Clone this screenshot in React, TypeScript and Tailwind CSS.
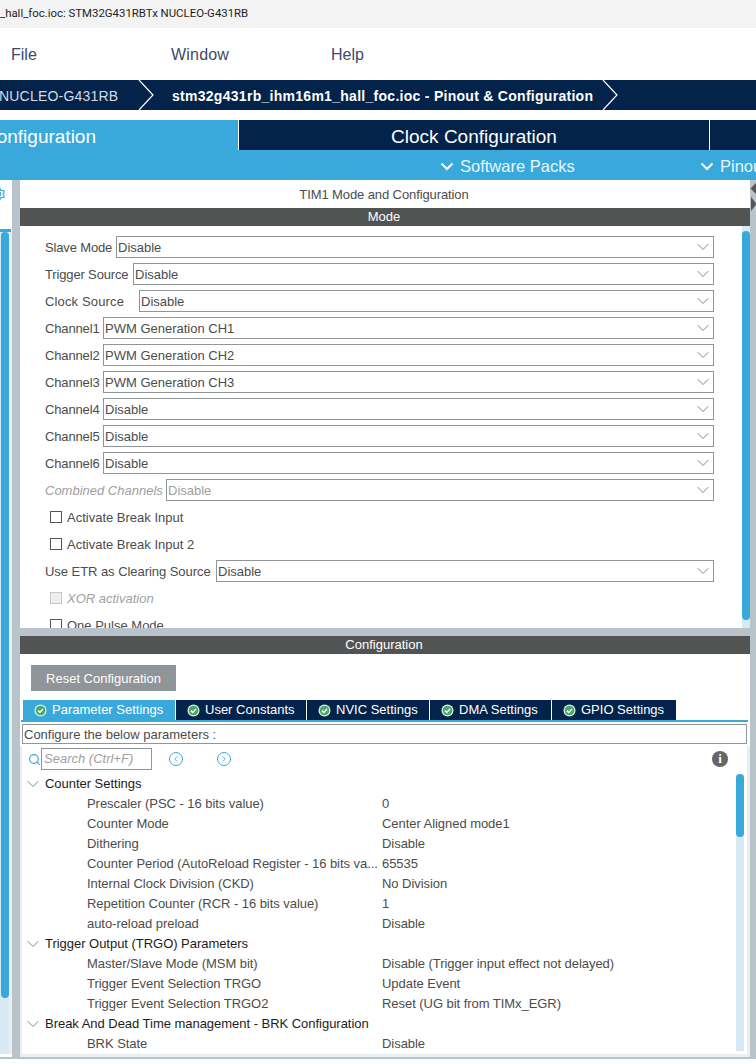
import React from 'react';
import { ChevronDown, ChevronLeft, ChevronRight, Search, Settings } from 'lucide-react';

const modeRows = [
    { label: 'Slave Mode', value: 'Disable', left: 'w-[71px]' },
    { label: 'Trigger Source', value: 'Disable', left: 'w-[88px]' },
    { label: 'Clock Source', value: 'Disable', left: 'w-[94px]' },
    { label: 'Channel1', value: 'PWM Generation CH1', left: 'w-[58px]' },
    { label: 'Channel2', value: 'PWM Generation CH2', left: 'w-[58px]' },
    { label: 'Channel3', value: 'PWM Generation CH3', left: 'w-[58px]' },
    { label: 'Channel4', value: 'Disable', left: 'w-[58px]' },
    { label: 'Channel5', value: 'Disable', left: 'w-[58px]' },
    { label: 'Channel6', value: 'Disable', left: 'w-[58px]' },
];

const tabs = [
    { name: 'Parameter Settings', width: 'w-[152px]', active: true },
    { name: 'User Constants', width: 'w-[131px]', active: false },
    { name: 'NVIC Settings', width: 'w-[123px]', active: false },
    { name: 'DMA Settings', width: 'w-[122px]', active: false },
    { name: 'GPIO Settings', width: 'w-[125px]', active: false },
];

const tree = [
    { kind: 'group', label: 'Counter Settings' },
    { kind: 'item', label: 'Prescaler (PSC - 16 bits value)', value: '0' },
    { kind: 'item', label: 'Counter Mode', value: 'Center Aligned mode1' },
    { kind: 'item', label: 'Dithering', value: 'Disable' },
    { kind: 'item', label: 'Counter Period (AutoReload Register - 16 bits va...', value: '65535' },
    { kind: 'item', label: 'Internal Clock Division (CKD)', value: 'No Division' },
    { kind: 'item', label: 'Repetition Counter (RCR - 16 bits value)', value: '1' },
    { kind: 'item', label: 'auto-reload preload', value: 'Disable' },
    { kind: 'group', label: 'Trigger Output (TRGO) Parameters' },
    { kind: 'item', label: 'Master/Slave Mode (MSM bit)', value: 'Disable (Trigger input effect not delayed)' },
    { kind: 'item', label: 'Trigger Event Selection TRGO', value: 'Update Event' },
    { kind: 'item', label: 'Trigger Event Selection TRGO2', value: 'Reset (UG bit from TIMx_EGR)' },
    { kind: 'group', label: 'Break And Dead Time management - BRK Configuration' },
    { kind: 'item', label: 'BRK State', value: 'Disable' },
];

function Select({ value, disabled }: { value: string; disabled?: boolean }) {
    return (
        <div className={`flex-1 h-[22px] border border-[#8f9599] flex items-center pl-[1px] ${disabled ? 'text-[#a0a0a0]' : 'text-[#4c4c4c]'}`}>
            <span className="flex-1 pt-[1px]">{value}</span>
            <ChevronDown size={20} strokeWidth={1.1} className="text-[#77797c]" />
        </div>
    );
}

function Checkbox({ label, disabled }: { label: string; disabled?: boolean }) {
    return (
        <div className={`h-[22px] mb-[5px] pl-[30px] flex items-center gap-[5px] ${disabled ? 'text-[#a0a0a0] italic' : 'text-[#4c4c4c]'}`}>
            <span className={`w-3 h-3 border ${disabled ? 'border-[#c6c8ca] bg-[#eeeeee]' : 'border-[#555555]'}`} />
            <span className="pt-[1px]">{label}</span>
        </div>
    );
}

function TabCheck() {
    return (
        <svg width="13" height="13" viewBox="0 0 13 13">
            <circle cx="6.5" cy="6.5" r="6" fill="#e6f4e4" />
            <circle cx="6.5" cy="6.5" r="4.8" fill="#46a86a" />
            <path d="M4 6.6l1.8 1.8L9 5" fill="none" stroke="#ffffff" strokeWidth="1.5" />
        </svg>
    );
}

function PackChevron() {
    return (
        <svg width="14" height="9" viewBox="0 0 14 9" className="shrink-0">
            <path d="M1.5 1.5L7 7l5.5-5.5" fill="none" stroke="#ffffff" strokeWidth="2" />
        </svg>
    );
}

export default function App() {
    return (
        <div className="w-[756px] h-[1064px] overflow-hidden bg-white flex flex-col text-[13px] font-['Liberation_Sans',Arial,sans-serif]">
            <div className="h-[28px] shrink-0 bg-[#f3f3f3] flex items-center text-[11.4px] text-[#1f1f1f] font-['Roboto',sans-serif] whitespace-nowrap">
                _hall_foc.ioc: STM32G431RBTx NUCLEO-G431RB
            </div>

            <div className="h-[52px] shrink-0 flex items-center pt-[1px] text-[16px] text-[#3c4a6b]">
                <span className="w-[160px] ml-[11px]">File</span>
                <span className="w-[160px] tracking-[0.2px]">Window</span>
                <span>Help</span>
            </div>

            {/* breadcrumb */}
            <div className="h-[30px] shrink-0 bg-[#03234b] flex items-center text-white whitespace-nowrap">
                <span className="w-[139px] -ml-[1px] pt-[2px] text-[14px] text-[#d5dbe4] tracking-[0.2px]">NUCLEO-G431RB</span>
                <svg width="17" height="30" viewBox="0 0 17 30" className="shrink-0">
                    <path d="M1 0l14 15L1 30" fill="none" stroke="#ffffff" strokeWidth="1.2" />
                </svg>
                <span className="ml-[17px] w-[430px] pt-[2px] text-[14px] font-bold tracking-[0.28px]">stm32g431rb_ihm16m1_hall_foc.ioc - Pinout &amp; Configuration</span>
                <svg width="17" height="30" viewBox="0 0 17 30" className="shrink-0">
                    <path d="M1 0l14 15L1 30" fill="none" stroke="#ffffff" strokeWidth="1.2" />
                </svg>
            </div>

            <div className="h-[10px] shrink-0" />

            {/* top tabs */}
            <div className="h-[30px] shrink-0 flex text-[19px] whitespace-nowrap bg-[#03234b] text-white">
                <div className="w-[239px] bg-[#39a9dc] border-r border-white flex items-center justify-end pr-[142px] pt-[4px]">onfiguration</div>
                <div className="w-[471px] border-r border-white flex items-center justify-center pt-[4px]">Clock Configuration</div>
            </div>
            <div className="h-[30px] shrink-0 bg-[#39a9dc] flex items-center pt-[2px] text-[16.5px] text-[#e8f5fb] whitespace-nowrap">
                <span className="ml-[440px]"><PackChevron /></span>
                <span className="ml-[6px] w-[240px] shrink-0">Software Packs</span>
                <PackChevron />
                <span className="ml-[6px]">Pinout</span>
            </div>

            <div className="h-[879px] shrink-0 flex border-b-2 border-[#b8c4ca]">
                {/* collapsed left pane */}
                <div className="w-[12px] shrink-0 flex flex-col pb-[3px]">
                    <div className="h-[49px] shrink-0 relative overflow-hidden">
                        <Settings size={14} strokeWidth={2} className="absolute -left-[8px] top-[7px] text-[#39a9dc]" />
                    </div>
                    <div className="h-[3px] w-[11px] shrink-0 bg-[#39a9dc]" />
                    <div className="flex-1 bg-[#e9eef1] pr-[3px]">
                        <div className="h-full bg-[#d6e9f5] pl-[1px]">
                            <div className="h-[766px] bg-[#39a9dc] rounded-[4px]" />
                        </div>
                    </div>
                </div>
                <div className="w-[8px] shrink-0 bg-[#b8c4ca]" />

                <div className="w-[730px] shrink-0 flex flex-col">
                    {/* mode panel */}
                    <div className="h-[448px] shrink-0 flex flex-col overflow-hidden">
                        <div className="h-[28px] shrink-0 flex items-center justify-center pr-[2px] pt-[1px] text-[#4c4c4c] tracking-[-0.1px]">TIM1 Mode and Configuration</div>
                        <div className="h-[18px] shrink-0 bg-[#525453] text-white flex items-center justify-center pr-[2px]">Mode</div>
                        <div className="flex-1 min-h-0 flex">
                            <div className="w-[722px] pt-[10px] pr-[28px] overflow-hidden">
                                {modeRows.map((row) => (
                                    <div key={row.label} className="h-[22px] mb-[5px] pl-[25px] flex items-center">
                                        <span className={`${row.left} shrink-0 pt-[1px] text-[#4c4c4c] ${row.label === 'Clock Source' ? 'tracking-[0.15px]' : 'tracking-[-0.15px]'} whitespace-nowrap`}>{row.label}</span>
                                        <Select value={row.value} />
                                    </div>
                                ))}
                                <div className="h-[22px] mb-[5px] pl-[25px] flex items-center">
                                    <span className="w-[121px] shrink-0 pt-[1px] text-[#a0a0a0] italic whitespace-nowrap">Combined Channels</span>
                                    <Select value="Disable" disabled />
                                </div>
                                <Checkbox label="Activate Break Input" />
                                <Checkbox label="Activate Break Input 2" />
                                <div className="h-[22px] mb-[5px] pl-[25px] flex items-center">
                                    <span className="w-[171px] shrink-0 pt-[1px] text-[#4c4c4c] tracking-[-0.05px] whitespace-nowrap">Use ETR as Clearing Source</span>
                                    <Select value="Disable" />
                                </div>
                                <Checkbox label="XOR activation" disabled />
                                <Checkbox label="One Pulse Mode" />
                            </div>
                            <div className="w-[8px] shrink-0 bg-[#d6e9f5] pt-[5px]">
                                <div className="h-[389px] bg-[#39a9dc] rounded-[4px]" />
                            </div>
                        </div>
                    </div>

                    <div className="h-[8px] shrink-0 bg-[#b8c4ca]" />

                    {/* configuration panel */}
                    <div className="h-[18px] shrink-0 bg-[#525453] text-white flex items-center justify-center pr-[2px]">Configuration</div>
                    <div className="pl-[11px] pt-[11px]">
                        <button className="w-[145px] h-[26px] pt-[1px] bg-[#909599] text-white">Reset Configuration</button>
                    </div>
                    <div className="h-[20px] mt-[9px] ml-[3px] shrink-0 flex">
                        {tabs.map((tab) => (
                            <div
                                key={tab.name}
                                className={`${tab.width} ${tab.active ? 'bg-[#39a9dc]' : 'bg-[#03234b] border-l border-white'} flex items-center pl-[11px] gap-[5px] text-white whitespace-nowrap`}
                            >
                                <TabCheck />
                                {tab.name}
                            </div>
                        ))}
                    </div>
                    <div className="h-[2px] ml-[1px] mr-[2px] shrink-0 bg-[#39a9dc]" />
                    <div className="h-[20px] ml-[2px] mr-[3px] mt-[2px] pt-[1px] shrink-0 border border-[#8f9599] flex items-center pl-[1px] text-[#4c4c4c]">Configure the below parameters :</div>

                    <div className="flex-1 min-h-0 mt-[2px] flex flex-col border-l-2 border-r-[3px] border-b-[3px] border-[#e9eef1]">
                        <div className="flex items-center h-[22px] mt-[2px] shrink-0 pl-[6px]">
                            <Search size={13} strokeWidth={2.2} className="text-[#39a9dc]" />
                            <div className="w-[111px] h-[22px] border border-[#8f9599] flex items-center pl-[2px] italic text-[#a0a0a0] whitespace-nowrap overflow-hidden">Search (Ctrl+F)</div>
                            <span className="ml-[17px] w-[14px] h-[14px] rounded-full border border-[#39a9dc] text-[#39a9dc] flex items-center justify-center">
                                <ChevronLeft size={10} strokeWidth={2} />
                            </span>
                            <span className="ml-[34px] w-[14px] h-[14px] rounded-full border border-[#39a9dc] text-[#39a9dc] flex items-center justify-center">
                                <ChevronRight size={10} strokeWidth={2} />
                            </span>
                            <span className="ml-[481px] w-4 h-4 rounded-full bg-[#666666] text-white font-bold font-['Liberation_Serif',serif] flex items-center justify-center">i</span>
                        </div>

                        {/* parameter tree */}
                        <div className="flex-1 min-h-0 flex mt-[4px]">
                            <div className="flex-1 min-w-0 pl-[1px] overflow-hidden">
                                {tree.map((row) =>
                                    row.kind === 'group' ? (
                                        <div key={row.label} className="h-[20px] flex items-center text-[#1c1c1c] tracking-[-0.03px] whitespace-nowrap">
                                            <ChevronDown size={20} strokeWidth={1.1} className="text-[#77797c] mr-[2px] shrink-0" />
                                            {row.label}
                                        </div>
                                    ) : (
                                        <div key={row.label} className="h-[20px] flex items-center text-[#4c4c4c] tracking-[-0.05px] whitespace-nowrap">
                                            <span className="w-[295px] ml-[64px] shrink-0">{row.label}</span>
                                            <span>{row.value}</span>
                                        </div>
                                    )
                                )}
                            </div>
                            <div className="w-[8px] shrink-0 mr-[3px] mb-[3px] bg-[#d6e9f5]">
                                <div className="h-[63px] bg-[#39a9dc] rounded-[4px]" />
                            </div>
                        </div>
                    </div>
                </div>

                <div className="w-[6px] shrink-0 bg-[#b8c4ca] relative">
                    <svg width="6" height="34" viewBox="0 0 6 34" className="absolute left-0 top-0">
                        <path d="M6 3L0.5 8.5 6 14z" fill="#555555" />
                        <path d="M1 17l5.5 7L1 31z" fill="#555555" />
                    </svg>
                </div>
            </div>
        </div>
    );
}
